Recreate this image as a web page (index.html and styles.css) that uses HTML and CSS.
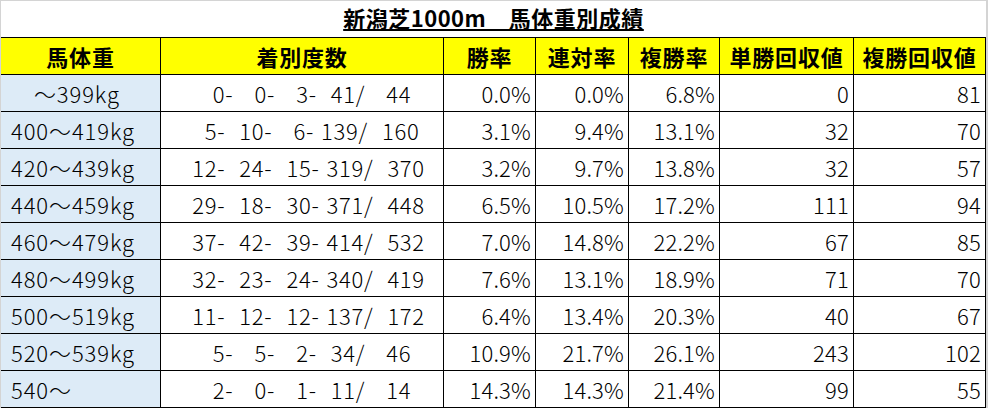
FILE: index.html
```html
<!DOCTYPE html>
<html lang="ja">
<head>
<meta charset="utf-8">
<title>新潟芝1000m 馬体重別成績</title>
<link rel="stylesheet" href="styles.css">
</head>
<body>
<div class="frame">
  <div class="title"><span>新潟芝1000m　馬体重別成績</span></div>
  <div class="grid">
    <div class="c h">馬体重</div><div class="c h">着別度数</div><div class="c h">勝率</div><div class="c h">連対率</div><div class="c h">複勝率</div><div class="c h">単勝回収値</div><div class="c h">複勝回収値</div>

    <div class="c k">　～399kg</div><div class="c d">  0-   0-   3-  41/   44</div><div class="c n">0.0%</div><div class="c n">0.0%</div><div class="c n">6.8%</div><div class="c n">0</div><div class="c n">81</div>
    <div class="c k">400～419kg</div><div class="c d">  5-  10-   6- 139/  160</div><div class="c n">3.1%</div><div class="c n">9.4%</div><div class="c n">13.1%</div><div class="c n">32</div><div class="c n">70</div>
    <div class="c k">420～439kg</div><div class="c d"> 12-  24-  15- 319/  370</div><div class="c n">3.2%</div><div class="c n">9.7%</div><div class="c n">13.8%</div><div class="c n">32</div><div class="c n">57</div>
    <div class="c k">440～459kg</div><div class="c d"> 29-  18-  30- 371/  448</div><div class="c n">6.5%</div><div class="c n">10.5%</div><div class="c n">17.2%</div><div class="c n">111</div><div class="c n">94</div>
    <div class="c k">460～479kg</div><div class="c d"> 37-  42-  39- 414/  532</div><div class="c n">7.0%</div><div class="c n">14.8%</div><div class="c n">22.2%</div><div class="c n">67</div><div class="c n">85</div>
    <div class="c k">480～499kg</div><div class="c d"> 32-  23-  24- 340/  419</div><div class="c n">7.6%</div><div class="c n">13.1%</div><div class="c n">18.9%</div><div class="c n">71</div><div class="c n">70</div>
    <div class="c k">500～519kg</div><div class="c d"> 11-  12-  12- 137/  172</div><div class="c n">6.4%</div><div class="c n">13.4%</div><div class="c n">20.3%</div><div class="c n">40</div><div class="c n">67</div>
    <div class="c k">520～539kg</div><div class="c d">  5-   5-   2-  34/   46</div><div class="c n">10.9%</div><div class="c n">21.7%</div><div class="c n">26.1%</div><div class="c n">243</div><div class="c n">102</div>
    <div class="c k">540～</div><div class="c d">  2-   0-   1-  11/   14</div><div class="c n">14.3%</div><div class="c n">14.3%</div><div class="c n">21.4%</div><div class="c n">99</div><div class="c n">55</div>
  </div>
</div>
</body>
</html>
```
FILE: styles.css
```css
html, body {
  margin: 0;
  padding: 0;
  background: #ffffff;
}

.frame {
  box-sizing: border-box;
  width: 988px;
  height: 408px;
  border-top: 1px solid #d4d4d4;
  border-left: 1px solid #d4d4d4;
  border-right: 2px solid #d4d4d4;
  font-family: "Noto Sans CJK JP", "Noto Sans", sans-serif;
  color: #000;
  overflow: hidden;
}

.title {
  height: 36px;
  display: flex;
  justify-content: center;
  align-items: flex-start;
  font-size: 22px;
  font-weight: 700;
  line-height: 28px;
  padding-top: 2px;
  box-sizing: border-box;
  letter-spacing: 0.5px;
}

.title span {
  text-decoration: underline;
  text-decoration-thickness: 1.5px;
  text-underline-offset: 2px;
}

.grid {
  display: grid;
  grid-template-columns: 160px 283px 92px 93px 91px 134px 132px;
  grid-auto-rows: 37px;
  border-top: 1px solid #000;
}

.c {
  box-sizing: border-box;
  border-right: 1px solid #000;
  border-bottom: 1px solid #000;
  display: flex;
  align-items: center;
  font-size: 22px;
  font-weight: 300;
  line-height: 1;
  white-space: pre;
}

.h {
  background: #ffff00;
  justify-content: center;
  font-weight: 700;
  font-size: 22px;
  letter-spacing: 0.8px;
}

.k {
  background: #ddebf7;
  padding-left: 10px;
  letter-spacing: 0.9px;
}

.d {
  justify-content: center;
  word-spacing: 1.5px;
  letter-spacing: 0.7px;
  padding-left: 6px;
}

.n {
  justify-content: flex-end;
  padding-right: 4px;
  letter-spacing: 0.2px;
}
```
